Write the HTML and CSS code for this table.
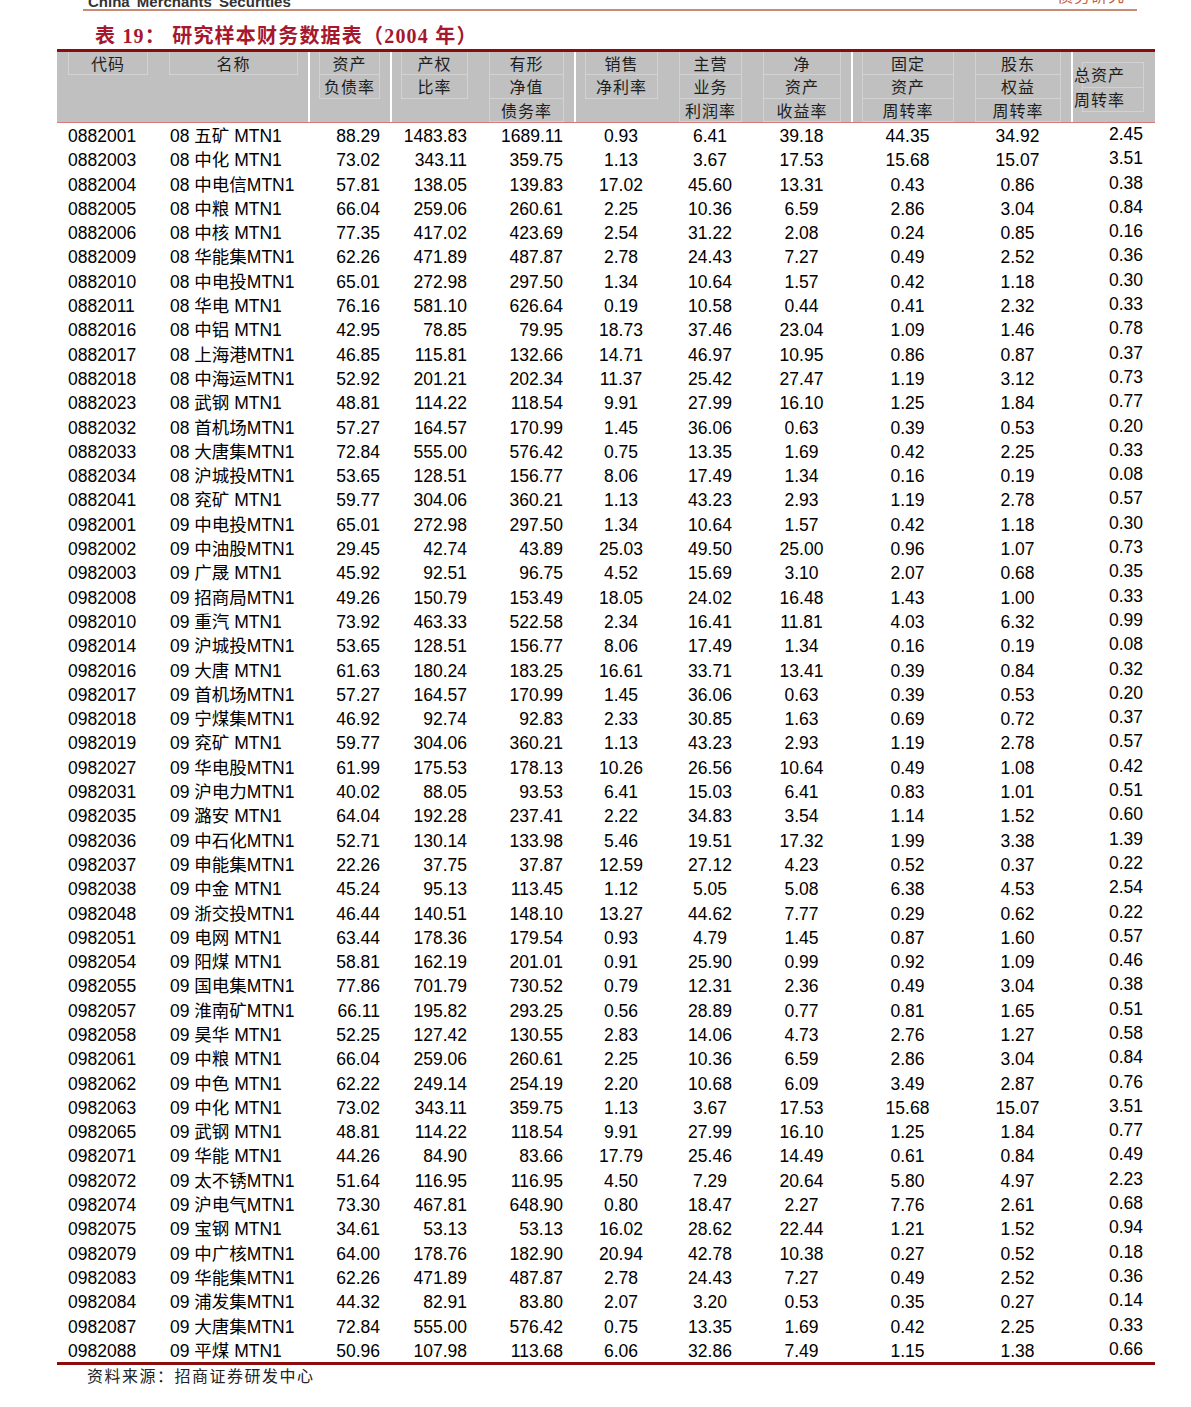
FILE: index.html
```html
<!DOCTYPE html>
<html lang="zh-CN">
<head>
<meta charset="utf-8">
<title>研究样本财务数据表</title>
<link rel="stylesheet" href="styles.css">
</head>
<body>
<div class="topbar">
  <span class="brand">China Merchants Securities</span>
  <span class="dept">债务研究</span>
</div>
<h1 class="title">表 19： 研究样本财务数据表（2004 年）</h1>
<div class="table">
  <div class="head">
    <div class="hc"><div class="lab">代码</div></div>
    <div class="hc"><div class="lab">名称</div></div>
    <div class="hc sep"><div class="lab">资产</div><div class="lab">负债率</div></div>
    <div class="hc sep"><div class="lab">产权</div><div class="lab">比率</div></div>
    <div class="hc"><div class="lab">有形</div><div class="lab">净值</div><div class="lab">债务率</div></div>
    <div class="hc sep"><div class="lab">销售</div><div class="lab">净利率</div></div>
    <div class="hc"><div class="lab">主营</div><div class="lab">业务</div><div class="lab">利润率</div></div>
    <div class="hc"><div class="lab">净</div><div class="lab">资产</div><div class="lab">收益率</div></div>
    <div class="hc sep"><div class="lab">固定</div><div class="lab">资产</div><div class="lab">周转率</div></div>
    <div class="hc"><div class="lab">股东</div><div class="lab">权益</div><div class="lab">周转率</div></div>
    <div class="hc sep last"><div class="box"><div class="lab2">总资产</div><div class="lab2">周转率</div></div></div>
  </div>
  <div class="body">
    <div class="row"><span>0882001</span><span>08 五矿 MTN1</span><span>88.29</span><span>1483.83</span><span>1689.11</span><span>0.93</span><span>6.41</span><span>39.18</span><span>44.35</span><span>34.92</span><span>2.45</span></div>
    <div class="row"><span>0882003</span><span>08 中化 MTN1</span><span>73.02</span><span>343.11</span><span>359.75</span><span>1.13</span><span>3.67</span><span>17.53</span><span>15.68</span><span>15.07</span><span>3.51</span></div>
    <div class="row"><span>0882004</span><span>08 中电信MTN1</span><span>57.81</span><span>138.05</span><span>139.83</span><span>17.02</span><span>45.60</span><span>13.31</span><span>0.43</span><span>0.86</span><span>0.38</span></div>
    <div class="row"><span>0882005</span><span>08 中粮 MTN1</span><span>66.04</span><span>259.06</span><span>260.61</span><span>2.25</span><span>10.36</span><span>6.59</span><span>2.86</span><span>3.04</span><span>0.84</span></div>
    <div class="row"><span>0882006</span><span>08 中核 MTN1</span><span>77.35</span><span>417.02</span><span>423.69</span><span>2.54</span><span>31.22</span><span>2.08</span><span>0.24</span><span>0.85</span><span>0.16</span></div>
    <div class="row"><span>0882009</span><span>08 华能集MTN1</span><span>62.26</span><span>471.89</span><span>487.87</span><span>2.78</span><span>24.43</span><span>7.27</span><span>0.49</span><span>2.52</span><span>0.36</span></div>
    <div class="row"><span>0882010</span><span>08 中电投MTN1</span><span>65.01</span><span>272.98</span><span>297.50</span><span>1.34</span><span>10.64</span><span>1.57</span><span>0.42</span><span>1.18</span><span>0.30</span></div>
    <div class="row"><span>0882011</span><span>08 华电 MTN1</span><span>76.16</span><span>581.10</span><span>626.64</span><span>0.19</span><span>10.58</span><span>0.44</span><span>0.41</span><span>2.32</span><span>0.33</span></div>
    <div class="row"><span>0882016</span><span>08 中铝 MTN1</span><span>42.95</span><span>78.85</span><span>79.95</span><span>18.73</span><span>37.46</span><span>23.04</span><span>1.09</span><span>1.46</span><span>0.78</span></div>
    <div class="row"><span>0882017</span><span>08 上海港MTN1</span><span>46.85</span><span>115.81</span><span>132.66</span><span>14.71</span><span>46.97</span><span>10.95</span><span>0.86</span><span>0.87</span><span>0.37</span></div>
    <div class="row"><span>0882018</span><span>08 中海运MTN1</span><span>52.92</span><span>201.21</span><span>202.34</span><span>11.37</span><span>25.42</span><span>27.47</span><span>1.19</span><span>3.12</span><span>0.73</span></div>
    <div class="row"><span>0882023</span><span>08 武钢 MTN1</span><span>48.81</span><span>114.22</span><span>118.54</span><span>9.91</span><span>27.99</span><span>16.10</span><span>1.25</span><span>1.84</span><span>0.77</span></div>
    <div class="row"><span>0882032</span><span>08 首机场MTN1</span><span>57.27</span><span>164.57</span><span>170.99</span><span>1.45</span><span>36.06</span><span>0.63</span><span>0.39</span><span>0.53</span><span>0.20</span></div>
    <div class="row"><span>0882033</span><span>08 大唐集MTN1</span><span>72.84</span><span>555.00</span><span>576.42</span><span>0.75</span><span>13.35</span><span>1.69</span><span>0.42</span><span>2.25</span><span>0.33</span></div>
    <div class="row"><span>0882034</span><span>08 沪城投MTN1</span><span>53.65</span><span>128.51</span><span>156.77</span><span>8.06</span><span>17.49</span><span>1.34</span><span>0.16</span><span>0.19</span><span>0.08</span></div>
    <div class="row"><span>0882041</span><span>08 兖矿 MTN1</span><span>59.77</span><span>304.06</span><span>360.21</span><span>1.13</span><span>43.23</span><span>2.93</span><span>1.19</span><span>2.78</span><span>0.57</span></div>
    <div class="row"><span>0982001</span><span>09 中电投MTN1</span><span>65.01</span><span>272.98</span><span>297.50</span><span>1.34</span><span>10.64</span><span>1.57</span><span>0.42</span><span>1.18</span><span>0.30</span></div>
    <div class="row"><span>0982002</span><span>09 中油股MTN1</span><span>29.45</span><span>42.74</span><span>43.89</span><span>25.03</span><span>49.50</span><span>25.00</span><span>0.96</span><span>1.07</span><span>0.73</span></div>
    <div class="row"><span>0982003</span><span>09 广晟 MTN1</span><span>45.92</span><span>92.51</span><span>96.75</span><span>4.52</span><span>15.69</span><span>3.10</span><span>2.07</span><span>0.68</span><span>0.35</span></div>
    <div class="row"><span>0982008</span><span>09 招商局MTN1</span><span>49.26</span><span>150.79</span><span>153.49</span><span>18.05</span><span>24.02</span><span>16.48</span><span>1.43</span><span>1.00</span><span>0.33</span></div>
    <div class="row"><span>0982010</span><span>09 重汽 MTN1</span><span>73.92</span><span>463.33</span><span>522.58</span><span>2.34</span><span>16.41</span><span>11.81</span><span>4.03</span><span>6.32</span><span>0.99</span></div>
    <div class="row"><span>0982014</span><span>09 沪城投MTN1</span><span>53.65</span><span>128.51</span><span>156.77</span><span>8.06</span><span>17.49</span><span>1.34</span><span>0.16</span><span>0.19</span><span>0.08</span></div>
    <div class="row"><span>0982016</span><span>09 大唐 MTN1</span><span>61.63</span><span>180.24</span><span>183.25</span><span>16.61</span><span>33.71</span><span>13.41</span><span>0.39</span><span>0.84</span><span>0.32</span></div>
    <div class="row"><span>0982017</span><span>09 首机场MTN1</span><span>57.27</span><span>164.57</span><span>170.99</span><span>1.45</span><span>36.06</span><span>0.63</span><span>0.39</span><span>0.53</span><span>0.20</span></div>
    <div class="row"><span>0982018</span><span>09 宁煤集MTN1</span><span>46.92</span><span>92.74</span><span>92.83</span><span>2.33</span><span>30.85</span><span>1.63</span><span>0.69</span><span>0.72</span><span>0.37</span></div>
    <div class="row"><span>0982019</span><span>09 兖矿 MTN1</span><span>59.77</span><span>304.06</span><span>360.21</span><span>1.13</span><span>43.23</span><span>2.93</span><span>1.19</span><span>2.78</span><span>0.57</span></div>
    <div class="row"><span>0982027</span><span>09 华电股MTN1</span><span>61.99</span><span>175.53</span><span>178.13</span><span>10.26</span><span>26.56</span><span>10.64</span><span>0.49</span><span>1.08</span><span>0.42</span></div>
    <div class="row"><span>0982031</span><span>09 沪电力MTN1</span><span>40.02</span><span>88.05</span><span>93.53</span><span>6.41</span><span>15.03</span><span>6.41</span><span>0.83</span><span>1.01</span><span>0.51</span></div>
    <div class="row"><span>0982035</span><span>09 潞安 MTN1</span><span>64.04</span><span>192.28</span><span>237.41</span><span>2.22</span><span>34.83</span><span>3.54</span><span>1.14</span><span>1.52</span><span>0.60</span></div>
    <div class="row"><span>0982036</span><span>09 中石化MTN1</span><span>52.71</span><span>130.14</span><span>133.98</span><span>5.46</span><span>19.51</span><span>17.32</span><span>1.99</span><span>3.38</span><span>1.39</span></div>
    <div class="row"><span>0982037</span><span>09 申能集MTN1</span><span>22.26</span><span>37.75</span><span>37.87</span><span>12.59</span><span>27.12</span><span>4.23</span><span>0.52</span><span>0.37</span><span>0.22</span></div>
    <div class="row"><span>0982038</span><span>09 中金 MTN1</span><span>45.24</span><span>95.13</span><span>113.45</span><span>1.12</span><span>5.05</span><span>5.08</span><span>6.38</span><span>4.53</span><span>2.54</span></div>
    <div class="row"><span>0982048</span><span>09 浙交投MTN1</span><span>46.44</span><span>140.51</span><span>148.10</span><span>13.27</span><span>44.62</span><span>7.77</span><span>0.29</span><span>0.62</span><span>0.22</span></div>
    <div class="row"><span>0982051</span><span>09 电网 MTN1</span><span>63.44</span><span>178.36</span><span>179.54</span><span>0.93</span><span>4.79</span><span>1.45</span><span>0.87</span><span>1.60</span><span>0.57</span></div>
    <div class="row"><span>0982054</span><span>09 阳煤 MTN1</span><span>58.81</span><span>162.19</span><span>201.01</span><span>0.91</span><span>25.90</span><span>0.99</span><span>0.92</span><span>1.09</span><span>0.46</span></div>
    <div class="row"><span>0982055</span><span>09 国电集MTN1</span><span>77.86</span><span>701.79</span><span>730.52</span><span>0.79</span><span>12.31</span><span>2.36</span><span>0.49</span><span>3.04</span><span>0.38</span></div>
    <div class="row"><span>0982057</span><span>09 淮南矿MTN1</span><span>66.11</span><span>195.82</span><span>293.25</span><span>0.56</span><span>28.89</span><span>0.77</span><span>0.81</span><span>1.65</span><span>0.51</span></div>
    <div class="row"><span>0982058</span><span>09 昊华 MTN1</span><span>52.25</span><span>127.42</span><span>130.55</span><span>2.83</span><span>14.06</span><span>4.73</span><span>2.76</span><span>1.27</span><span>0.58</span></div>
    <div class="row"><span>0982061</span><span>09 中粮 MTN1</span><span>66.04</span><span>259.06</span><span>260.61</span><span>2.25</span><span>10.36</span><span>6.59</span><span>2.86</span><span>3.04</span><span>0.84</span></div>
    <div class="row"><span>0982062</span><span>09 中色 MTN1</span><span>62.22</span><span>249.14</span><span>254.19</span><span>2.20</span><span>10.68</span><span>6.09</span><span>3.49</span><span>2.87</span><span>0.76</span></div>
    <div class="row"><span>0982063</span><span>09 中化 MTN1</span><span>73.02</span><span>343.11</span><span>359.75</span><span>1.13</span><span>3.67</span><span>17.53</span><span>15.68</span><span>15.07</span><span>3.51</span></div>
    <div class="row"><span>0982065</span><span>09 武钢 MTN1</span><span>48.81</span><span>114.22</span><span>118.54</span><span>9.91</span><span>27.99</span><span>16.10</span><span>1.25</span><span>1.84</span><span>0.77</span></div>
    <div class="row"><span>0982071</span><span>09 华能 MTN1</span><span>44.26</span><span>84.90</span><span>83.66</span><span>17.79</span><span>25.46</span><span>14.49</span><span>0.61</span><span>0.84</span><span>0.49</span></div>
    <div class="row"><span>0982072</span><span>09 太不锈MTN1</span><span>51.64</span><span>116.95</span><span>116.95</span><span>4.50</span><span>7.29</span><span>20.64</span><span>5.80</span><span>4.97</span><span>2.23</span></div>
    <div class="row"><span>0982074</span><span>09 沪电气MTN1</span><span>73.30</span><span>467.81</span><span>648.90</span><span>0.80</span><span>18.47</span><span>2.27</span><span>7.76</span><span>2.61</span><span>0.68</span></div>
    <div class="row"><span>0982075</span><span>09 宝钢 MTN1</span><span>34.61</span><span>53.13</span><span>53.13</span><span>16.02</span><span>28.62</span><span>22.44</span><span>1.21</span><span>1.52</span><span>0.94</span></div>
    <div class="row"><span>0982079</span><span>09 中广核MTN1</span><span>64.00</span><span>178.76</span><span>182.90</span><span>20.94</span><span>42.78</span><span>10.38</span><span>0.27</span><span>0.52</span><span>0.18</span></div>
    <div class="row"><span>0982083</span><span>09 华能集MTN1</span><span>62.26</span><span>471.89</span><span>487.87</span><span>2.78</span><span>24.43</span><span>7.27</span><span>0.49</span><span>2.52</span><span>0.36</span></div>
    <div class="row"><span>0982084</span><span>09 浦发集MTN1</span><span>44.32</span><span>82.91</span><span>83.80</span><span>2.07</span><span>3.20</span><span>0.53</span><span>0.35</span><span>0.27</span><span>0.14</span></div>
    <div class="row"><span>0982087</span><span>09 大唐集MTN1</span><span>72.84</span><span>555.00</span><span>576.42</span><span>0.75</span><span>13.35</span><span>1.69</span><span>0.42</span><span>2.25</span><span>0.33</span></div>
    <div class="row"><span>0982088</span><span>09 平煤 MTN1</span><span>50.96</span><span>107.98</span><span>113.68</span><span>6.06</span><span>32.86</span><span>7.49</span><span>1.15</span><span>1.38</span><span>0.66</span></div>
  </div>
</div>
<p class="source">资料来源：招商证券研发中心</p>
</body>
</html>
```
FILE: styles.css
```css
* { box-sizing: border-box; }

body {
  margin: 0;
  background: #fff;
  color: #000;
  font-family: "Liberation Sans", "Noto Sans CJK SC", sans-serif;
}

.topbar {
  margin-left: 83px;
  width: 1054px;
  height: 11px;
  border-bottom: 2px solid #c68c78;
  display: flex;
  justify-content: space-between;
  align-items: flex-end;
}

.brand {
  margin-left: 5px;
  font: bold 15px/15px "Liberation Sans", sans-serif;
  word-spacing: 3px;
  color: #333;
}

.dept {
  margin: 0 12px 6px 0;
  font: 16px/16px "Noto Sans CJK SC", sans-serif;
  letter-spacing: 1px;
  color: #c0603c;
}

.title {
  margin: 0 0 0 95px;
  padding-top: 12px;
  height: 38px;
  font: bold 20px/26px "Liberation Serif", "Noto Sans CJK SC", serif;
  letter-spacing: 1.2px;
  color: #a5182e;
}

.table {
  --cols: 101px 150px 82px 88px 96px 94px 84px 99px 113px 107px 84px;
  margin-left: 57px;
  width: 1098px;
}

.head {
  display: grid;
  grid-template-columns: var(--cols);
  height: 74px;
  background: #c0c0c0;
  border-top: 3px solid #8b0c0c;
  border-bottom: 1px solid #d87a7a;
}

.hc {
  display: flex;
  flex-direction: column;
  padding: 0 10px 0 11px;
}

.hc.sep { box-shadow: inset 2px 0 0 #fff; }

.lab {
  height: 23.33px;
  line-height: 23.33px;
  text-align: center;
  font-family: "Noto Sans CJK SC", sans-serif;
  font-size: 16px;
  letter-spacing: 1px;
  color: #1e1e1e;
  border: 1px solid #d2d2d2;
  border-top: 0;
}

.hc.last {
  justify-content: center;
  padding: 0 11px;
}

.box {
  border: 1px solid #d2d2d2;
}

.lab2 {
  height: 24px;
  line-height: 23px;
  text-indent: -9px;
  white-space: nowrap;
  font-family: "Noto Sans CJK SC", sans-serif;
  font-size: 16px;
  letter-spacing: 1px;
  color: #1e1e1e;
}

.lab2 + .lab2 { border-top: 1px solid #d2d2d2; }

.body {
  border-bottom: 3px solid #8b0c0c;
}

.row {
  display: grid;
  grid-template-columns: var(--cols);
  height: 24.3px;
  font-size: 17.5px;
  line-height: 24.3px;
  white-space: nowrap;
}

.row span { padding-top: 1px; }
.row span:nth-child(1) { padding-left: 11px; }
.row span:nth-child(2) { padding-left: 12px; }
.row span:nth-child(3) { text-align: right; padding-right: 10px; }
.row span:nth-child(4),
.row span:nth-child(5) { text-align: right; padding-right: 11px; }
.row span:nth-child(n+6) { text-align: center; }
.row span:nth-child(11) {
  text-align: right;
  padding-right: 12px;
  line-height: 20px;
}

.source {
  margin: 0 0 0 87px;
  font: 16px/20px "Noto Sans CJK SC", sans-serif;
  letter-spacing: 1.5px;
  color: #222;
}
```
